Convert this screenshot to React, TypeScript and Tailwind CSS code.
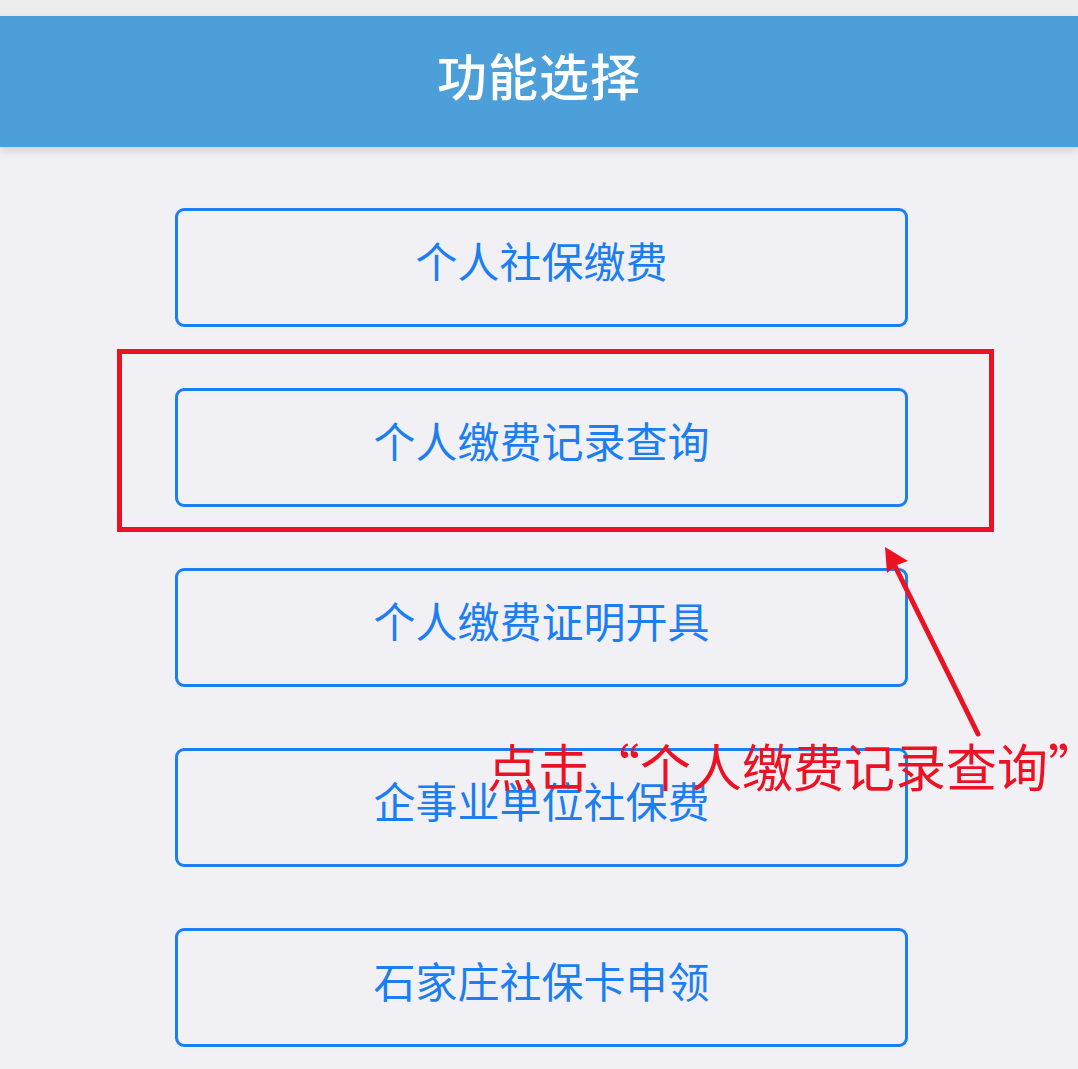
import React from 'react';

const items = ['个人社保缴费', '个人缴费记录查询', '个人缴费证明开具', '企事业单位社保费', '石家庄社保卡申领'];

const font = { fontFamily: '"Noto Sans CJK SC", "Noto Sans", sans-serif' };

const App: React.FC = () => {
  return (
    <div className="relative min-h-[1069px] w-[1078px] overflow-hidden bg-[#f0f0f5]" style={font}>
      {/* status strip */}
      <div className="h-[16px] bg-[#eeeded]" />

      {/* header */}
      <div className="relative z-10 flex h-[131px] items-center justify-center bg-[#4d9fd9] pb-[16px] shadow-[0_4px_8px_rgba(0,0,0,0.12)]">
        <h1 className="text-[50px] font-medium leading-none tracking-[1px] text-white">功能选择</h1>
      </div>

      {/* menu */}
      <div className="ml-[175px] flex w-[733px] flex-col gap-[61px] pt-[61px]">
        {items.map((label) => (
          <button
            key={label}
            className="flex h-[119px] items-center justify-center rounded-[9px] border-[3px] border-[#1b7ef2] bg-transparent pb-[16px] text-[42px] leading-none text-[#1b7ef2]"
          >
            {label}
          </button>
        ))}
      </div>

      {/* annotation: red highlight box */}
      <div className="pointer-events-none absolute left-[117px] top-[349px] h-[183px] w-[877px] border-[5px] border-[#ec1224]" />

      {/* annotation: arrow */}
      <svg className="pointer-events-none absolute left-0 top-0" width="1078" height="1069" viewBox="0 0 1078 1069">
        <line x1="978" y1="734" x2="890" y2="556" stroke="#ec1224" strokeWidth="5" strokeLinecap="round" />
        <polygon points="885,547 908,561 897,565 887,573" fill="#ec1224" />
      </svg>

      {/* annotation: caption */}
      <div className="pointer-events-none absolute left-[487px] top-[740px] whitespace-nowrap text-[51px] leading-none text-[#ec1224]">
        点击“个人缴费记录查询”
      </div>
    </div>
  );
};

export default App;
